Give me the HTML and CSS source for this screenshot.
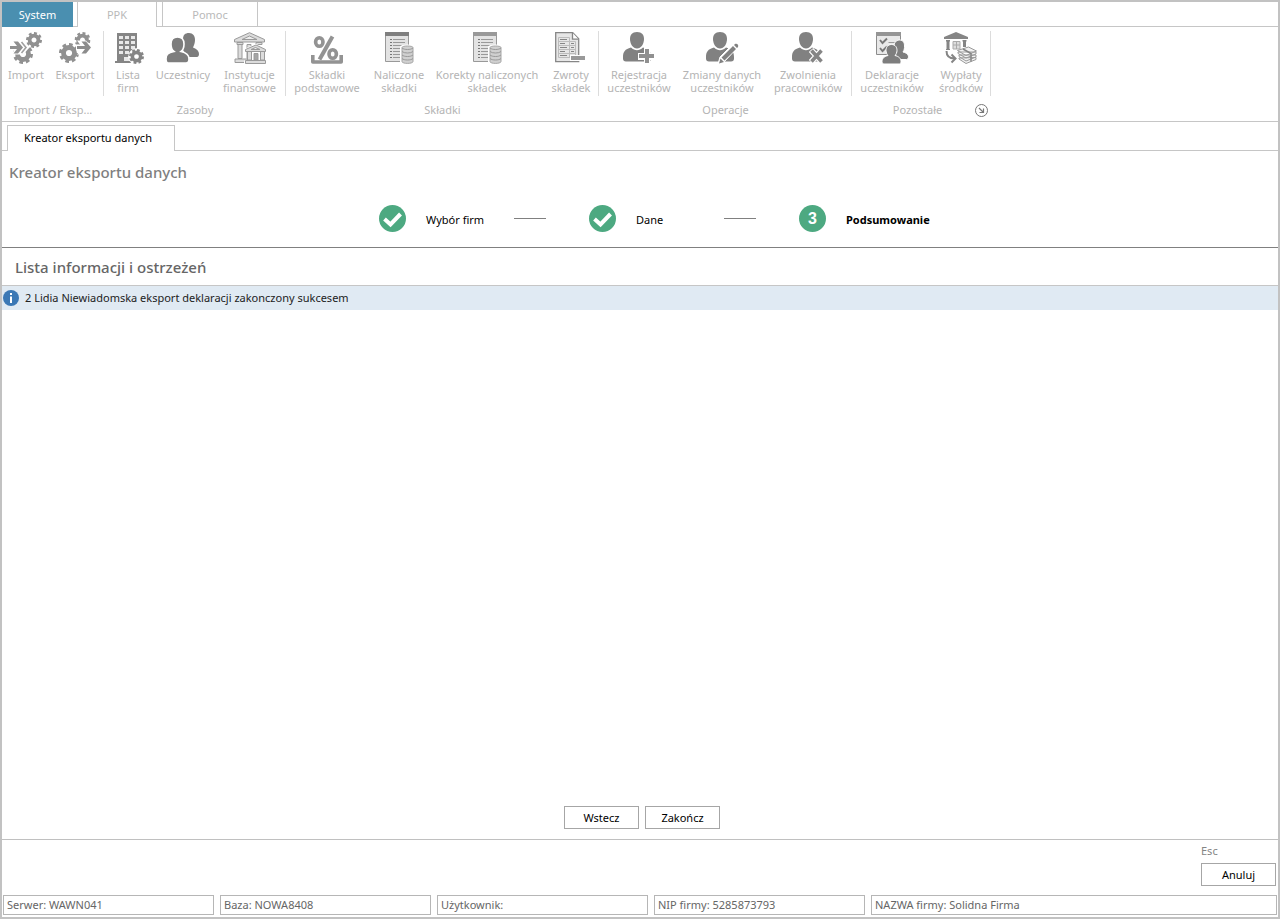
FILE: index.html
```
<!DOCTYPE html>
<html lang="pl">
<head>
<meta charset="utf-8">
<meta name="viewport" content="width=device-width, initial-scale=1">
<title>Kreator eksportu danych</title>
<link rel="stylesheet" href="styles.css">
</head>
<body>
<svg class="defs" aria-hidden="true">
  <symbol id="gear" viewBox="-10 -10 20 20">
    <circle r="5.500" fill="none" stroke="currentColor" stroke-width="4.800"/>
    <circle r="8.400" fill="none" stroke="currentColor" stroke-width="3.200" pathLength="16" stroke-dasharray="1.100 .900"/>
  </symbol>
  <symbol id="person" viewBox="0 0 32 32">
    <path d="M14 0c5 0 7 3 7 7 0 5-3 9.500-7 9.500S7 12 7 7c0-4 2-7 7-7z"/>
    <path d="M8 15.500c2 1.800 4 2.700 6 2.700s4-.900 6-2.700c6 1.500 8 4.500 8 9.500v1.500c0 2-1 3-3 3H3c-2 0-3-1-3-3V25c0-5 2-8 8-9.500z"/>
  </symbol>
  <symbol id="ledger" viewBox="0 0 32 32">
    <path d="M2.500 2h23v27.500h-23z" fill="#e3e3e3" stroke="#999"/>
    <path d="M7 7.500h2M7 10.500h2M7 13.500h2M7 16.500h2M7 19.500h2M7 22.500h2M7 25.500h2" stroke="#777"/>
    <path d="M10 7.500h12M10 10.500h12M10 13.500h9M10 16.500h8M10 19.500h8M10 22.500h8M10 25.500h8" stroke="#999"/>
    <path d="M18 15c0-2 13-2 13 0v15c0 3-13 3-13 0z" fill="#d4d4d4" stroke="#fff" stroke-width="2"/>
    <path d="M19 15.500c0-2 11-2 11 0v14c0 2.500-11 2.500-11 0z" fill="#d0d0d0" stroke="#a6a6a6"/>
    <path d="M19 16c2 2 9 2 11 0M19 19.500c2 2 9 2 11 0M19 23c2 2 9 2 11 0M19 26.500c2 2 9 2 11 0" fill="none" stroke="#999"/>
  </symbol>
</svg>

<div class="window">
  <nav class="tabs" aria-label="Menu">
    <button class="tab tab-system">System</button>
    <button class="tab tab-active">PPK</button>
    <button class="tab tab-help">Pomoc</button>
  </nav>

  <div class="ribbon">
    <section class="group">
      <div class="tools tools-io">
        <button class="tool">
          <svg class="icon" viewBox="0 0 32 32"><g color="#919191"><use href="#gear" x="3" y="12" width="20" height="20"/><use href="#gear" x="16" y="0" width="16" height="16"/></g><path d="M0 13.500h6L3 9.500h10l5 6-5 6H3l3-4H0z" fill="#fff" stroke="#fff" stroke-width="2"/><path d="M0 14h7L3.500 9.500H8l5 6-5 6H3.500L7 17H0z" fill="#909090"/><path d="M11.500 10l4.500 5.500-4.500 5.500" fill="none" stroke="#a0a0a0" stroke-width="1.600"/></svg>
          <span>Import</span>
        </button>
        <button class="tool">
          <svg class="icon" viewBox="0 0 32 32"><g color="#919191"><use href="#gear" x="0" y="11" width="20" height="20"/><use href="#gear" x="15.500" y="0" width="16" height="16"/></g><path d="M18 13.500h5L20 9.500h6.500l5.500 6-5.500 6H20l3-4h-5z" fill="#fff" stroke="#fff" stroke-width="2"/><path d="M18 14h8l-3.500-4.500H27l5 6-5 6h-4.500L26 17h-8z" fill="#8c8c8c"/></svg>
          <span>Eksport</span>
        </button>
      </div>
      <h2 class="group-name">Import / Eksp...</h2>
    </section>

    <section class="group">
      <div class="tools tools-data">
        <button class="tool">
          <svg class="icon" viewBox="0 0 32 32"><path d="M5 1h20v28h2v2H3v-2h2z" fill="#858585"/><path d="M7 4h4v3H7zM13 4h4v3h-4zM19 4h4v3h-4zM7 9h4v3H7zM13 9h4v3h-4zM19 9h4v3h-4zM7 14h4v3H7zM13 14h4v3h-4zM19 14h4v3h-4zM7 19h4v3H7zM13 19h4v3h-4zM12 25h6v4h-6z" fill="#e8e8e8"/><circle cx="24.500" cy="24.500" r="8.300" fill="#fff"/><g color="#858585"><use href="#gear" x="17" y="17" width="15" height="15"/></g></svg>
          <span>Lista<br>firm</span>
        </button>
        <button class="tool">
          <svg class="icon" viewBox="0 0 32 32" fill="#7d7d7d"><path d="M22 1c4 0 6 3 6 7 0 3-1 5-2 7.500 4 1.500 6 3.500 6 6.500 0 2-1 3-2 3h-9l-5-7V7c0-4 2-6 6-6z"/><path d="M10.500 5c5 0 6.500 3 6.500 7 0 3-1 6-3 7.500 5 1 8 3 8 7.500 0 3-1 4-3 4H2c-2 0-3-1-3-4 0-4.500 2-6.500 8-7.500-2-1.500-3-4.500-3-7.500 0-4 1.500-7 6.500-7z" stroke="#fff" stroke-width="1.600"/></svg>
          <span>Uczestnicy</span>
        </button>
        <button class="tool">
          <svg class="icon" viewBox="0 0 32 32" fill="#dcdcdc" stroke="#9a9a9a"><path d="M.5 10V7.500L15.500.700 30.500 7.500V10z"/><path d="M8 7.500h15L15.500 4z" fill="#ececec"/><path d="M3 10.500h6v2H3zM22 10.500h6v2h-6zM4 12.500h4v14H4zM13 12.500h4v14h-4zM1 27h16v3.500H1z"/><path d="M10.500 19.500v-2.800l11.500-5 11 5v2.800h-2v9h2V33H10v-4.500h3v-9z" fill="#fff" stroke="none"/><path d="M11.500 19.500v-2l10.500-4.500 9.500 4.500v2zM13.500 19.500h4v8.500h-4zM26.500 19.500h4v8.500h-4zM11.500 28.500h20v3h-20z"/><path d="M17 17.500h9l-4.500-2z" fill="#ececec"/><path d="M20 21.500h4V28h-4z" fill="#a5a5a5"/></svg>
          <span>Instytucje<br>finansowe</span>
        </button>
      </div>
      <h2 class="group-name">Zasoby</h2>
    </section>

    <section class="group">
      <div class="tools tools-fees">
        <button class="tool">
          <svg class="icon" viewBox="0 0 32 32" fill="none" stroke="#939393"><ellipse cx="8.300" cy="10" rx="3.700" ry="4.300" stroke-width="3.600"/><ellipse cx="21.700" cy="22" rx="3.700" ry="4.300" stroke-width="3.600"/><path d="M21.500 4.500L8.500 27.500" stroke-width="4"/><path d="M1.800 23v7h28.400v-7" stroke-width="3.600" stroke-linejoin="round"/></svg>
          <span>Składki<br>podstawowe</span>
        </button>
        <button class="tool">
          <svg class="icon" viewBox="0 0 32 32"><use href="#ledger" width="32" height="32"/><path d="M2 0h24v4H2z" fill="#7f7f7f"/></svg>
          <span>Naliczone<br>składki</span>
        </button>
        <button class="tool">
          <svg class="icon" viewBox="0 0 32 32"><use href="#ledger" width="32" height="32"/><path d="M2 0h24v4H2z" fill="#999"/></svg>
          <span>Korekty naliczonych<br>składek</span>
        </button>
        <button class="tool">
          <svg class="icon" viewBox="0 0 32 32"><path d="M.7.700h17l6 6v23H.7z" fill="#e6e6e6" stroke="#868686" stroke-width="1.300"/><path d="M17.500.700v6.500h6" fill="#fff" stroke="#868686" stroke-width="1.300"/><path d="M3.500 5.500h11v4h6v16h-17zM14.500 9.500v16M3.500 9.500h11M3.500 13.500h17M3.500 17.500h17M3.500 21.500h17" fill="none" stroke="#bcbcbc"/><path d="M5 7.500h7M5 11.500h5M5 15.500h7M5 19.500h5M5 23.500h7M16 11.500h3M16 15.500h3M16 19.500h3" stroke="#858585"/><path d="M15 23h17v6H15z" fill="#fff"/><path d="M16 24h14v4H16z" fill="#999"/></svg>
          <span>Zwroty<br>składek</span>
        </button>
      </div>
      <h2 class="group-name">Składki</h2>
    </section>

    <section class="group">
      <div class="tools tools-ops">
        <button class="tool">
          <svg class="icon" viewBox="0 0 32 32" fill="#818181"><use href="#person" width="32" height="32"/><path d="M21 16h6v5h5v7h-5v4h-6v-4h-6v-7h6z" fill="#fff"/><path d="M22 17h4v5h5v4h-5v5h-4v-5h-6v-4h6z" fill="#909090"/></svg>
          <span>Rejestracja<br>uczestników</span>
        </button>
        <button class="tool">
          <svg class="icon" viewBox="0 0 32 32" fill="#818181"><use href="#person" width="32" height="32"/><path d="M12 32l2-7L28 11l4 4-14 15z" fill="#fff" stroke="#fff"/><path d="M13 31.500l1.500-5 3.500 3.500zM15.500 25.500L27 14l3 3-11.500 11.500zM28 13l1-1c2-1 4 1 3 3l-1 1z"/></svg>
          <span>Zmiany danych<br>uczestników</span>
        </button>
        <button class="tool">
          <svg class="icon" viewBox="0 0 32 32" fill="#818181"><use href="#person" width="32" height="32"/><path d="M19 18l11 12M30 18L19 30" stroke="#fff" stroke-width="6"/><path d="M19.500 18.500l10 11M29.500 18.500l-10 11" stroke="#858585" stroke-width="3.500"/></svg>
          <span>Zwolnienia<br>pracowników</span>
        </button>
      </div>
      <h2 class="group-name">Operacje</h2>
    </section>

    <section class="group">
      <div class="tools tools-other">
        <button class="tool">
          <svg class="icon" viewBox="0 0 32 32" fill="#7e7e7e"><path d="M.5.500h24v22H.5z" fill="#e8e8e8" stroke="#8c8c8c"/><path d="M0 0h25v4H0z" fill="#959595"/><path d="M4 8l2.500 3L11 6.500M4 16l2.500 3 4.500-4.500" fill="none" stroke="#777" stroke-width="1.900"/><path d="M12.500 10.500h9" stroke="#999"/><path d="M23.500 8c4 0 5 3 5 6 0 2 0 4-1.500 6 4 1 5.500 3 5.500 5 0 1-1 2.500-2 2.500h-8.500l-4-7V14c0-3 2-6 5.500-6z" stroke="#fff"/><path d="M15.500 12.500c4 0 5.500 3 5.500 6 0 2-1 4-2 5 4 1 6 3 6 6 0 2-1 2.500-2 2.500H8c-1 0-2-1-2-2.500 0-3 2-5 6-6-1-1-2-3-2-5 0-3 1.500-6 5.500-6z" stroke="#fff"/></svg>
          <span>Deklaracje<br>uczestników</span>
        </button>
        <button class="tool">
          <svg class="icon" viewBox="0 0 32 32" fill="#858585"><path d="M-1 5L11 0l12 5v2H-1zM1 8h4v1.500H4.500V17H5v1H1v-1h.5V9.500H1zM17.500 8h4v1.500H21V15h-3V9.500h-.5z"/><path d="M8 9.500h7V17H8zM11.500 9.500V17M8 13h7" fill="#ddd" stroke="#aaa"/><path d="M1.500 19c0 5 3 7.500 8 7.500M6.500 22.500l4 4-4 4" fill="none" stroke="#858585" stroke-width="2"/><g fill="#f2f2f2" stroke="#9a9a9a"><path d="M14 26v1l7 4.500 10-4v-2zM14 23v1.500l7 4.500 10-4v-2zM13 20v1.500l8 4.500 10-4v-2zM12.500 18.500l11-3.500 8 4L21 23.500z"/><path d="M18 17l8 4.500v8" fill="none" stroke="#858585" stroke-width="1.500"/></g></svg>
          <span>Wypłaty<br>środków</span>
        </button>
      </div>
      <div class="group-foot">
        <h2 class="group-name">Pozostałe</h2>
        <button class="launcher" aria-label="Więcej opcji">
          <svg class="launcher-icon" viewBox="0 0 13 13" fill="none" stroke="#777"><circle cx="6.500" cy="6.500" r="6"/><path d="M4 4l4.500 4.500M8.500 4.500v4h-4" stroke-width="1.200"/></svg>
        </button>
      </div>
    </section>
  </div>

  <div class="documents">
    <button class="document-tab">Kreator eksportu danych</button>
  </div>

  <main class="wizard">
    <h1 class="title">Kreator eksportu danych</h1>
    <ol class="steps">
      <li class="step">
        <svg class="step-mark" viewBox="0 0 27 27"><circle cx="13.500" cy="13.500" r="13.500" fill="#4da981"/><path d="M5.500 14l6 5.500L21.500 9" fill="none" stroke="#fff" stroke-width="4"/></svg>
        <span class="step-name">Wybór firm</span><span class="dash"></span>
      </li>
      <li class="step">
        <svg class="step-mark" viewBox="0 0 27 27"><circle cx="13.500" cy="13.500" r="13.500" fill="#4da981"/><path d="M5.500 14l6 5.500L21.500 9" fill="none" stroke="#fff" stroke-width="4"/></svg>
        <span class="step-name">Dane</span><span class="dash"></span>
      </li>
      <li class="step">
        <span class="step-mark step-number">3</span>
        <span class="step-name step-current">Podsumowanie</span>
      </li>
    </ol>
    <h2 class="list-title">Lista informacji i ostrzeżeń</h2>
    <ul class="messages">
      <li class="message">
        <svg class="info" viewBox="0 0 16 16"><circle cx="8" cy="8" r="8" fill="#3b78b5"/><path d="M7 3h2v2H7zM7 6.500h2V13H7z" fill="#fff"/></svg>
        <span>2 Lidia Niewiadomska eksport deklaracji zakonczony sukcesem</span>
      </li>
    </ul>
    <div class="actions">
      <button class="button">Wstecz</button>
      <button class="button">Zakończ</button>
    </div>
  </main>

  <div class="cancel">
    <div class="cancel-box">
      <span class="shortcut">Esc</span>
      <button class="button">Anuluj</button>
    </div>
  </div>

  <footer class="status">
    <span class="cell">Serwer: WAWN041</span>
    <span class="cell">Baza: NOWA8408</span>
    <span class="cell">Użytkownik:</span>
    <span class="cell">NIP firmy: 5285873793</span>
    <span class="cell">NAZWA firmy: Solidna Firma</span>
  </footer>
</div>
</body>
</html>
```
FILE: styles.css
```
* { box-sizing: border-box; }
body {
  margin: 0;
  font: 11px/13px "Noto Sans", "Open Sans", sans-serif;
  color: #000;
  background: #fff;
}
button {
  font: inherit;
  color: inherit;
  background: none;
  border: 0;
  padding: 0;
}
h1, h2, ol, ul { margin: 0; padding: 0; font-weight: 400; list-style: none; }
.defs { position: absolute; width: 0; height: 0; }

.window {
  display: flex;
  flex-direction: column;
  min-height: 100vh;
  border: 2px solid #c2c2c2;
}

/* Menu tabs */
.tabs {
  display: flex;
  height: 25px;
  box-shadow: inset 0 -1px #c6c6c6;
}
.tab { color: #b9b9b9; border: solid #c6c6c6; border-width: 0 1px; }
.tab-system { width: 71px; margin-right: 4px; color: #fff; background: #4a8fb0; border: 0; }
.tab-active { width: 80px; margin-right: 5px; background: #fff; }
.tab-help { width: 96px; border-bottom-width: 1px; }

/* Ribbon */
.ribbon {
  display: flex;
  height: 95px;
  padding-top: 4px;
  border-bottom: 1px solid #c6c6c6;
  color: #b4b4b4;
}
.group { display: flex; flex-direction: column; }
.tools {
  display: grid;
  height: 65px;
  border-right: 1px solid #dcdcdc;
}
.tools-io { grid-template-columns: 48px 50px; padding-right: 3px; }
.tools-data { grid-template-columns: 48px 62px 71px; }
.tools-fees { grid-template-columns: 82px 62px 114px 54px; }
.tools-ops { grid-template-columns: 80px 86px 86px; }
.tools-other { grid-template-columns: 80px 58px; }
.tool {
  display: flex;
  flex-direction: column;
  align-items: center;
  gap: 4px;
  padding-top: 1px;
  white-space: nowrap;
}
.icon { width: 32px; height: 32px; flex: none; overflow: visible; }
.group-name {
  flex: 1;
  padding-top: 7px;
  font-size: 11px;
  text-align: center;
}
.group-foot { display: flex; flex: 1; align-items: flex-start; }
.group-foot .group-name { padding-left: 8px; }
.launcher { width: 13px; height: 13px; margin: 8px 3px 0 0; }
.launcher-icon { display: block; width: 13px; height: 13px; }

/* Open documents */
.documents {
  display: flex;
  height: 29px;
  padding: 3px 5px 0;
  box-shadow: inset 0 -1px #c6c6c6;
}
.document-tab {
  width: 168px;
  padding: 0 6px 2px 0;
  border: 1px solid #c6c6c6;
  border-bottom: 0;
  background: #fff;
}

/* Wizard */
.wizard { display: flex; flex: 1; flex-direction: column; }
.title {
  padding: 10px 7px 0;
  font-size: 15px;
  font-weight: 500;
  line-height: 22px;
  color: #7f7f7f;
}
.steps {
  display: grid;
  grid-template-columns: 210px 210px 130px;
  justify-content: center;
  padding: 22px 0 15px 28px;
  border-bottom: 1px solid #808080;
}
.step { display: flex; align-items: center; }
.step-mark { flex: none; width: 27px; height: 27px; margin-right: 20px; }
.step-number {
  border-radius: 50%;
  background: #4da981;
  color: #fff;
  font: bold 16px/27px "Liberation Sans", sans-serif;
  text-align: center;
}
.step-name { width: 88px; padding-top: 2px; }
.step-current { font-weight: 700; }
.dash { width: 32px; height: 1px; background: #808080; }
.list-title {
  padding: 8px 13px 7px;
  font-size: 15px;
  font-weight: 500;
  line-height: 22px;
  color: #666;
}
.messages { flex: 1; border-top: 1px solid #c6c6c6; }
.message {
  display: flex;
  align-items: center;
  gap: 6px;
  height: 24px;
  padding: 0 1px;
  background: #e0eaf3;
  color: #222;
}
.message span { padding-bottom: 2px; }
.info { width: 16px; height: 16px; }
.actions {
  display: flex;
  justify-content: center;
  gap: 6px;
  padding: 0 0 10px 4px;
}
.button { width: 75px; height: 23px; border: 1px solid #a6a6a6; background: #fff; }

/* Cancel area and status bar */
.cancel {
  display: flex;
  justify-content: flex-end;
  padding: 4px 2px 9px;
  border-top: 1px solid #c0c0c0;
}
.cancel-box { display: flex; flex-direction: column; gap: 6px; }
.shortcut { color: #858585; }
.status {
  display: grid;
  grid-template-columns: repeat(4, 211px) 1fr;
  gap: 6px;
  padding: 0 1px 2px;
  color: #666;
}
.cell {
  height: 20px;
  padding: 0 3px;
  border: 1px solid #b6b6b6;
  line-height: 18px;
  white-space: nowrap;
}
```
